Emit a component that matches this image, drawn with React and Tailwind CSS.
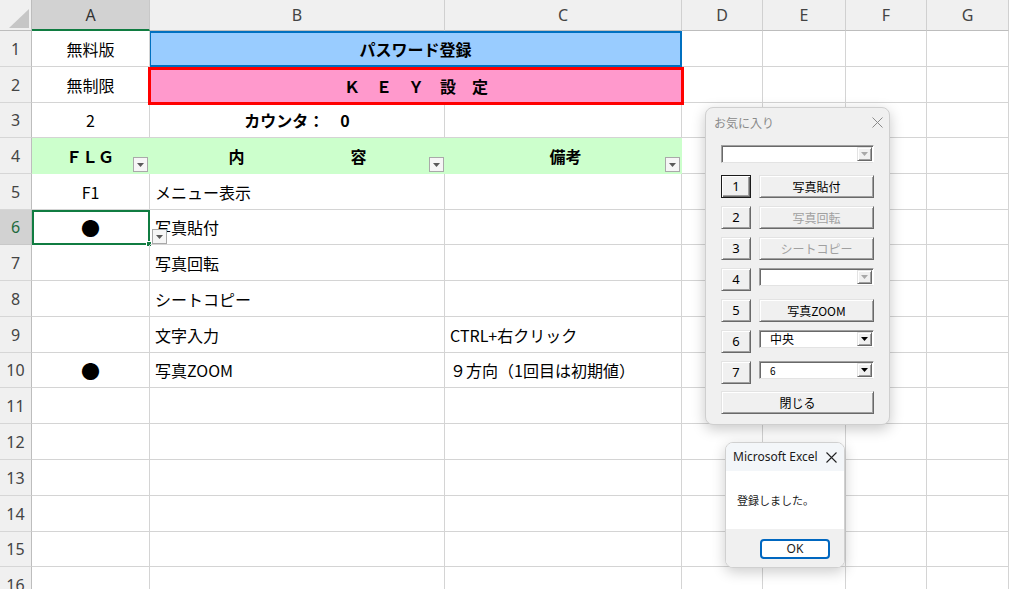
import React from "react";

const GRID = "border-r border-b border-[#d4d4d4]";

function Cell({ className = "", children }) {
  return (
    <div className={`${GRID} relative flex items-center whitespace-nowrap text-[16px] leading-none ${className}`}>
      {children}
    </div>
  );
}

function FilterBtn({ className = "" }) {
  return (
    <div className={`absolute w-[15px] h-[15px] bg-[#f6f6f6] border border-[#a9a9a9] flex items-center justify-center ${className}`}>
      <svg width="7" height="4" viewBox="0 0 7 4">
        <polygon points="0,0 7,0 3.5,4" fill="#5a5a5a" />
      </svg>
    </div>
  );
}

function RowHead({ n, selected = false }) {
  return (
    <div
      className={`flex items-center justify-center border-r border-b text-[16px] leading-none font-['Noto_Sans','Noto_Sans_CJK_JP',sans-serif] ${
        selected
          ? "bg-[#d2d2d2] text-[#1e6b3e] border-r-[#bdbdbd] border-b-[#c8c8c8]"
          : "bg-[#f0f0f0] text-[#444444] border-r-[#bdbdbd] border-b-[#d6d6d6]"
      }`}
    >
      {n}
    </div>
  );
}

function ColHead({ c, selected = false }) {
  return (
    <div
      className={`flex items-center justify-center border-r text-[16px] leading-none font-['Noto_Sans','Noto_Sans_CJK_JP',sans-serif] ${
        selected
          ? "bg-[#d2d2d2] text-[#333333] border-r-[#c8c8c8] border-b-2 border-b-[#107c41]"
          : "bg-[#f0f0f0] text-[#444444] border-r-[#d0d0d0] border-b border-b-[#bdbdbd]"
      }`}
    >
      {c}
    </div>
  );
}

function Empty({ n }) {
  return Array.from({ length: n }).map((_, i) => <Cell key={i} />);
}

function Tri({ color }) {
  return (
    <svg width="7" height="4" viewBox="0 0 7 4">
      <polygon points="0,0 7,0 3.5,4" fill={color} />
    </svg>
  );
}

const RAISED =
  "bg-[#f0f0f0] border border-t-[#e3e3e3] border-l-[#e3e3e3] border-r-[#696969] border-b-[#696969] shadow-[inset_1px_1px_0_#ffffff,inset_-1px_-1px_0_#a0a0a0]";

function Btn({ children, className = "", disabled = false, def = false }) {
  return (
    <div
      className={`flex items-center justify-center text-[12px] leading-none ${
        def
          ? "bg-[#f0f0f0] border border-[#1a1a1a] shadow-[inset_1px_1px_0_#ffffff,inset_-1px_-1px_0_#696969,inset_-2px_-2px_0_#a0a0a0]"
          : RAISED
      } ${disabled ? "text-[#a0a0a0]" : "text-black"} ${className}`}
    >
      {children}
    </div>
  );
}

function Combo({ children, active = false, className = "" }) {
  return (
    <div
      className={`relative flex items-center bg-white border border-t-[#a0a0a0] border-l-[#a0a0a0] border-r-[#ffffff] border-b-[#e3e3e3] shadow-[inset_1px_1px_0_#696969] ${className}`}
    >
      <div className="flex-1 pl-[10px] text-[12px] leading-none text-black">{children}</div>
      <div className={`mr-[1px] w-[15px] h-[14px] flex items-center justify-center ${RAISED}`}>
        <Tri color={active ? "#000000" : "#a8a8a8"} />
      </div>
    </div>
  );
}

function Favorites() {
  const rows = [
    { n: "1", def: true, el: <Btn className="flex-1 h-[23px]">写真貼付</Btn> },
    { n: "2", el: <Btn disabled className="flex-1 h-[23px]">写真回転</Btn> },
    { n: "3", el: <Btn disabled className="flex-1 h-[23px]">シートコピー</Btn> },
    { n: "4", el: <Combo className="flex-1 h-[18px] self-start" /> },
    { n: "5", el: <Btn className="flex-1 h-[23px]">写真ZOOM</Btn> },
    { n: "6", el: <Combo active className="flex-1 h-[18px] self-start">中央</Combo> },
    {
      n: "7",
      el: (
        <Combo active className="flex-1 h-[18px] self-start">
          <span className="text-[10px]">6</span>
        </Combo>
      ),
    },
  ];
  return (
    <div className="absolute left-[705px] top-[107px] w-[185px] h-[318px] rounded-[8px] bg-[#f0f0f0] border border-[#cfcfcf] shadow-[0_4px_14px_rgba(0,0,0,0.22)] flex flex-col font-['Noto_Sans_CJK_JP',sans-serif]">
      <div className="h-[29px] flex items-center justify-between pl-[8px] pr-[6px]">
        <span className="text-[12px] leading-none text-[#8a8a8a]">お気に入り</span>
        <svg width="11" height="11" viewBox="0 0 11 11">
          <path d="M0.5 0.5 L10.5 10.5 M10.5 0.5 L0.5 10.5" stroke="#8a8a8a" strokeWidth="1" />
        </svg>
      </div>
      <div className="flex flex-col px-[15px]">
        <Combo className="mt-[8px] h-[18px]" />
        <div className="mt-[12px] flex flex-col gap-[8px]">
          {rows.map((r) => (
            <div key={r.n} className="flex gap-[8px] h-[23px]">
              <Btn def={r.def} className="w-[30px] h-[23px] text-[13px] font-['Noto_Sans',sans-serif]">
                {r.n}
              </Btn>
              {r.el}
            </div>
          ))}
        </div>
        <Btn className="mt-[7px] h-[23px]">閉じる</Btn>
      </div>
    </div>
  );
}

function MsgBox() {
  return (
    <div className="absolute left-[725px] top-[442px] w-[120px] h-[126px] rounded-[8px] overflow-hidden border border-[#d0d0d0] bg-white shadow-[0_4px_14px_rgba(0,0,0,0.2)] flex flex-col">
      <div className="h-[28px] bg-[#f3f6f9] flex items-center justify-between pl-[7px] pr-[7px]">
        <span className="text-[12px] leading-none text-[#1a1a1a] font-['Noto_Sans',sans-serif]">Microsoft Excel</span>
        <svg width="11" height="11" viewBox="0 0 11 11">
          <path d="M0.5 0.5 L10.5 10.5 M10.5 0.5 L0.5 10.5" stroke="#222222" strokeWidth="1.1" />
        </svg>
      </div>
      <div className="h-[58px] bg-white flex items-center pl-[11px]">
        <span className="text-[11px] leading-none text-[#1a1a1a] font-['Noto_Sans_CJK_JP',sans-serif]">登録しました。</span>
      </div>
      <div className="flex-1 bg-[#f0f0f0] flex justify-end items-start pt-[10px] pr-[14px]">
        <div className="w-[70px] h-[20px] rounded-[4px] border-2 border-[#0067c0] bg-white flex items-center justify-center text-[12px] leading-none text-[#1a1a1a] font-['Noto_Sans',sans-serif]">
          OK
        </div>
      </div>
    </div>
  );
}

export default function App() {
  const cols = ["A", "B", "C", "D", "E", "F", "G"];
  const bRows = [
    [5, "メニュー表示"],
    [7, "写真回転"],
    [8, "シートコピー"],
  ];
  return (
    <div className="relative w-[1009px] h-[589px] overflow-hidden bg-white text-black font-['Noto_Sans_CJK_JP',sans-serif]">
      <div className="grid grid-cols-[32px_118px_295px_237px_81px_83px_81px_82px] grid-rows-[31px_36px_36px_35px_36px_36px_35px_36px_36px_36px_35px_36px_36px_36px_36px_35px_36px]">
        {/* header */}
        <div className="relative bg-[#f0f0f0] border-r border-b border-r-[#bdbdbd] border-b-[#bdbdbd]">
          <svg className="absolute right-[2px] bottom-[2px]" width="20" height="19" viewBox="0 0 20 19">
            <polygon points="20,0 20,19 0,19" fill="#c6c6c6" />
          </svg>
        </div>
        {cols.map((c) => (
          <ColHead key={c} c={c} selected={c === "A"} />
        ))}

        {/* row 1 */}
        <RowHead n={1} />
        <Cell className="justify-center">無料版</Cell>
        <div className="col-span-2 -ml-[1px] flex items-center justify-center bg-[#99ccff] border-2 border-[#0070c0] text-[16px] font-bold leading-none">
          パスワード登録
        </div>
        <Empty n={4} />

        {/* row 2 */}
        <RowHead n={2} />
        <Cell className="justify-center">無制限</Cell>
        <div className="relative z-10 col-span-2 -ml-[2px] -mr-[2px] -mb-[2px] flex items-center justify-center bg-[#ff99cc] border-[3px] border-[#ff0000] text-[16px] font-bold leading-none">
          Ｋ　Ｅ　Ｙ　設　定
        </div>
        <Empty n={4} />

        {/* row 3 */}
        <RowHead n={3} />
        <Cell className="justify-center">2</Cell>
        <Cell className="justify-center font-bold">カウンタ：　0</Cell>
        <Empty n={5} />

        {/* row 4 */}
        <RowHead n={4} />
        <div className="relative bg-[#ccffcc] flex items-center justify-center text-[16px] font-bold leading-none pr-[2px]">
          ＦＬＧ
          <FilterBtn className="right-[2px] bottom-[2px]" />
        </div>
        <div className="relative bg-[#ccffcc] flex items-center justify-center gap-[106px] text-[16px] font-bold leading-none">
          <span>内</span>
          <span>容</span>
          <FilterBtn className="right-[1px] bottom-[2px]" />
        </div>
        <div className="relative bg-[#ccffcc] flex items-center justify-center text-[16px] font-bold leading-none pl-[4px]">
          備考
          <FilterBtn className="right-[2px] bottom-[2px]" />
        </div>
        <Empty n={4} />

        {/* row 5 */}
        <RowHead n={5} />
        <Cell className="justify-center">F1</Cell>
        <Cell className="pl-[5px]">{bRows[0][1]}</Cell>
        <Empty n={5} />

        {/* row 6 */}
        <RowHead n={6} selected />
        <Cell className="justify-center">
          <span className="text-[19px]">●</span>
          <div className="absolute left-0 top-0 -right-[1px] -bottom-[1px] border-2 border-[#107c41] pointer-events-none" />
          <div className="absolute -right-[3px] -bottom-[3px] w-[6px] h-[6px] bg-[#107c41] border border-white" />
          <div className="absolute z-20 left-[120px] top-[19px] w-[15px] h-[15px] bg-[#f6f6f6] border border-[#a9a9a9] flex items-center justify-center">
            <Tri color="#5a5a5a" />
          </div>
        </Cell>
        <Cell className="pl-[5px]">写真貼付</Cell>
        <Empty n={5} />

        {/* row 7 */}
        <RowHead n={7} />
        <Cell />
        <Cell className="pl-[5px]">写真回転</Cell>
        <Empty n={5} />

        {/* row 8 */}
        <RowHead n={8} />
        <Cell />
        <Cell className="pl-[5px]">シートコピー</Cell>
        <Empty n={5} />

        {/* row 9 */}
        <RowHead n={9} />
        <Cell />
        <Cell className="pl-[5px]">文字入力</Cell>
        <Cell className="pl-[5px]">CTRL+右クリック</Cell>
        <Empty n={4} />

        {/* row 10 */}
        <RowHead n={10} />
        <Cell className="justify-center">
          <span className="text-[19px]">●</span>
        </Cell>
        <Cell className="pl-[5px]">写真ZOOM</Cell>
        <Cell className="pl-[5px]">９方向（1回目は初期値）</Cell>
        <Empty n={4} />

        {[11, 12, 13, 14, 15, 16].map((n) => (
          <React.Fragment key={n}>
            <RowHead n={n} />
            <Empty n={7} />
          </React.Fragment>
        ))}
      </div>
      <Favorites />
      <MsgBox />
    </div>
  );
}
